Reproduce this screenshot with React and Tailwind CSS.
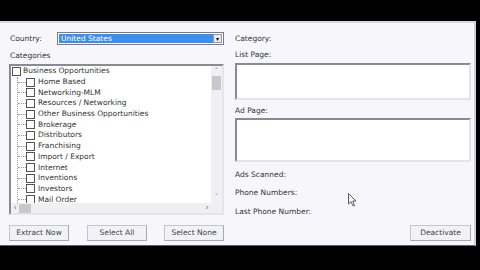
import React from "react";

const children = [
  "Home Based",
  "Networking-MLM",
  "Resources / Networking",
  "Other Business Opportunities",
  "Brokerage",
  "Distributors",
  "Franchising",
  "Import / Export",
  "Internet",
  "Inventions",
  "Investors",
  "Mail Order",
];

function Box() {
  return <span className="inline-block w-[9px] h-[9px] shrink-0 border border-[#555] bg-white" />;
}

function Btn({ label, w = "w-[60px]" }) {
  return (
    <button className={`${w} h-[16px] border border-[#c4c4cc] border-r-[#a8a8b0] border-b-[#a8a8b0] bg-[#f2f2f6] text-[7.5px] text-[#444] leading-none`}>
      {label}
    </button>
  );
}

export default function App() {
  return (
    <div className="w-[480px] h-[270px] bg-black overflow-hidden text-[#333]" style={{ fontFamily: '"DejaVu Sans", Verdana, sans-serif' }}>
      <div className="h-[21px]" />
      <div className="relative w-[476px] h-[225px] bg-[#f7f7fb] border-t-2 border-[#d6d6de] border-r-2 border-r-[#d0d0d8] border-b border-b-[#5a6070] pl-[9px] pr-[3px] text-[7.5px] leading-[10px]">
        <div className="flex">
          {/* left column */}
          <div className="w-[215px] shrink-0 flex flex-col">
            <div className="flex items-center mt-[9px] h-[13px]">
              <span className="w-[48px] pl-[1px]">Country:</span>
              <div className="flex-1 h-[13px] flex border border-[#7a7a86] bg-white p-[1px]">
                <div className="flex-1 bg-[#3b8ef0] text-white pl-[2px] leading-[9px]">United States</div>
                <div className="w-[9px] bg-[#e8e8ee] border border-[#999] text-[6px] leading-[7px] text-center text-black">▾</div>
              </div>
            </div>
            <div className="mt-[6px] pl-[1px]">Categories</div>
            <div className="mt-[3px] h-[151px] border-2 border-[#8a8a94] border-r-[#e4e4ea] border-b-[#e4e4ea] bg-white flex flex-col">
              <div className="flex flex-1 min-h-0">
                <div className="flex-1 pl-[1px] overflow-hidden">
                  <div className="flex items-center h-[10.7px] gap-[2px]">
                    <Box />
                    <span className="whitespace-nowrap">Business Opportunities</span>
                  </div>
                  <div className="ml-[5px] border-l border-dotted border-[#999]">
                    {children.map((c) => (
                      <div key={c} className="flex items-center h-[10.7px]">
                        <span className="w-[8px] border-t border-dotted border-[#999]" />
                        <Box />
                        <span className="ml-[3px] whitespace-nowrap">{c}</span>
                      </div>
                    ))}
                  </div>
                </div>
                <div className="w-[11px] bg-[#f0f0f2] flex flex-col items-center text-[#777]">
                  <span className="text-[7px] leading-[9px] mt-[1px]">˄</span>
                  <span className="w-[9px] h-[14px] bg-[#c8c8cc]" />
                  <span className="flex-1" />
                  <span className="text-[7px] leading-[9px] mb-[1px]">˅</span>
                </div>
              </div>
              <div className="h-[10px] bg-[#f0f0f2] flex items-center text-[#777] text-[8px]">
                <span className="w-[8px] text-center leading-none">‹</span>
                <span className="w-[12px] h-[9px] bg-[#c8c8cc]" />
                <span className="flex-1" />
                <span className="w-[8px] text-center leading-none">›</span>
                <span className="w-[11px]" />
              </div>
            </div>
          </div>
          {/* right column */}
          <div className="ml-[11px] w-[236px] shrink-0 flex flex-col">
            <div className="mt-[11px]">Category:</div>
            <div className="mt-[6px]">List Page:</div>
            <div className="mt-[3px] h-[37px] border-2 border-[#8a8a94] border-r-[#e4e4ea] border-b-[#e4e4ea] bg-white" />
            <div className="mt-[6px]">Ad Page:</div>
            <div className="mt-[2px] h-[44px] border-2 border-[#8a8a94] border-r-[#e4e4ea] border-b-[#e4e4ea] bg-white" />
            <div className="mt-[8px]">Ads Scanned:</div>
            <div className="mt-[8px]">Phone Numbers:</div>
            <div className="mt-[9px]">Last Phone Number:</div>
          </div>
        </div>
        <div className="flex mt-[8px]">
          <Btn label="Extract Now" />
          <span className="w-[18px]" />
          <Btn label="Select All" />
          <span className="w-[17px]" />
          <Btn label="Select None" />
          <span className="flex-1" />
          <Btn label="Deactivate" w="w-[61px]" />
        </div>
        <svg className="absolute left-[348px] top-[170px]" width="9" height="14" viewBox="0 0 9 14">
          <path d="M0.5 0.5 L0.5 11 L3 8.6 L5 13 L6.6 12.3 L4.7 8 L8 8 Z" fill="white" stroke="#333" strokeWidth="0.8" />
        </svg>
      </div>
    </div>
  );
}
